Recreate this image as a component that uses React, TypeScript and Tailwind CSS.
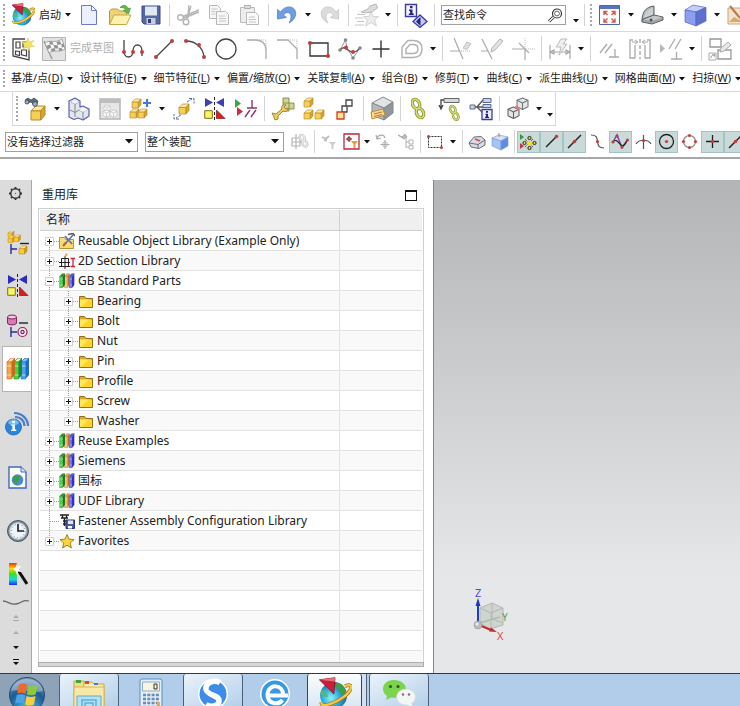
import React from 'react'
import { clsx } from 'clsx'

interface IconProps {
  w?: number
  h?: number
  children: React.ReactNode
}

function Icon({ w = 24, h = 24, children }: IconProps) {
  return (
    <svg width={w} height={h} viewBox={`0 0 ${w} ${h}`} fill="none" className="shrink-0" aria-hidden="true">
      {children}
    </svg>
  )
}

// Shared shapes, placed with x / y inside an Icon

interface ShapeProps {
  x?: number
  y?: number
  s?: number
}

function Cube({ x = 0, y = 0, s = 1, light = '#fdeaa0', mid = '#f5cf5a', dark = '#d9a52c', line = '#b58a22' }: ShapeProps & { light?: string; mid?: string; dark?: string; line?: string }) {
  return (
    <g transform={`translate(${x} ${y}) scale(${s})`} stroke={line} strokeWidth={0.7} strokeLinejoin="round">
      <path d="M0 3.500 3.500 0H10L7 3.500z" fill={light} />
      <path d="M0 3.500h7V10H0z" fill={mid} />
      <path d="M7 3.500 10 0v6.500L7 10z" fill={dark} />
    </g>
  )
}

function Glass({ x = 0, y = 0, s = 1, line = '#777', fill = '#e3e6ea' }: ShapeProps & { line?: string; fill?: string }) {
  return (
    <g transform={`translate(${x} ${y}) scale(${s})`} stroke={line} strokeWidth={1} strokeLinejoin="round">
      <path d="M5 0 10 2v6L5 10.500 0 8V2z" fill={fill} />
      <path d="M0 2l5 2.500L10 2M5 4.500v6" />
    </g>
  )
}

function Dot({ x, y, r = 2, fill = '#c93a3a' }: { x: number; y: number; r?: number; fill?: string }) {
  return <circle cx={x} cy={y} r={r} fill={fill} />
}

function Link({ x = 0, y = 0, s = 1, color = '#8c9a2c', glow = '#d8dd84' }: ShapeProps & { color?: string; glow?: string }) {
  return (
    <g transform={`translate(${x} ${y}) scale(${s})`}>
      <g stroke={color} strokeWidth={3.4}>
        <ellipse cx="5" cy="6" rx="3.400" ry="4.800" transform="rotate(-25 5 6)" />
        <ellipse cx="9" cy="15" rx="3.400" ry="4.800" transform="rotate(-25 9 15)" />
      </g>
      <g stroke={glow} strokeWidth={1.6}>
        <ellipse cx="5" cy="6" rx="3.400" ry="4.800" transform="rotate(-25 5 6)" />
        <ellipse cx="9" cy="15" rx="3.400" ry="4.800" transform="rotate(-25 9 15)" />
      </g>
    </g>
  )
}

function Globe({ size = 24 }: { size?: number }) {
  return (
    <svg width={size} height={size} viewBox="0 0 24 24" fill="none" className="shrink-0" aria-hidden="true">
      <defs>
        <radialGradient id="globe" cx="0.4" cy="0.6" r="0.65">
          <stop offset="0" stopColor="#8ff0fa" />
          <stop offset="0.5" stopColor="#2cb0e0" />
          <stop offset="1" stopColor="#1450a4" />
        </radialGradient>
      </defs>
      <circle cx="11" cy="13" r="9.500" fill="url(#globe)" />
      <path d="M13 4c4 0 7 4 7 8-2 1-4 0-5-2s-4-3-2-6z" fill="#3aa04c" />
      <path d="M3 9c2 0 4 3 4 5-2 1-5-1-5-3z" fill="#58b87c" />
      <path d="M19 6.500c3.500-1.500 4.800-.6 4.200 1.500C22 12 15 17 9 19c-4 1.300-7 1-6.500-1" stroke="#a8740f" strokeWidth="2.600" />
      <path d="M19 6.500c3.500-1.500 4.800-.6 4.200 1.500C22 12 15 17 9 19c-4 1.300-7 1-6.500-1" stroke="#f6c845" strokeWidth="1.600" />
      <path d="M1 2 12 .5 11.200 12z" fill="#c81f38" stroke="#8e1428" strokeWidth=".6" strokeLinejoin="round" />
      <path d="M1 2 12 .5l-.3 2.700z" fill="#e8707c" />
    </svg>
  )
}

function Mirror({ blue = '#2b2bc4' }: { blue?: string }) {
  return (
    <Icon w={22} h={23}>
      <path d="M1 1v9l8-4.500zM20 1v9l-8-4.500z" fill={blue} />
      <path d="M10.500 0v23" stroke="#222" strokeDasharray="3 2" />
      <path d="M.7 13.700h7.600v7.600H.7z" fill="#fbf45a" stroke="#7d7020" />
      <path d="M12.500 13v8.500h8.500z" fill="#d42222" stroke="#8a1010" strokeWidth=".7" />
    </Icon>
  )
}

function NewIcon() {
  return (
    <Icon w={18} h={22}>
      <path d="M1.500 1.500h10l5 5v14h-15z" fill="#eceffd" stroke="#6d78c8" />
      <path d="M11.500 1.500v5h5z" fill="#fff" stroke="#6d78c8" strokeLinejoin="round" />
    </Icon>
  )
}

function OpenIcon() {
  return (
    <Icon w={24} h={22}>
      <path d="M1.500 20V7l2-2h6l2 2h7v13z" fill="#eed274" stroke="#b89a3c" />
      <path d="M1.500 20.500 6 11h17l-4.500 9.500z" fill="#fdf3ae" stroke="#c4a84a" strokeLinejoin="round" />
      <path d="M12 3.500c3-3 6.500-3 8 1l2.500-.5-2 6-5-3.500 2-.7c-1-1.800-3-2.600-5.500-2.300z" fill="#63b94a" stroke="#3a8a2c" strokeWidth=".6" />
    </Icon>
  )
}

function SaveIcon() {
  return (
    <Icon w={20} h={20}>
      <path d="M1 1h18v18H3l-2-2z" fill="#5468a4" stroke="#3a4a80" />
      <path d="M4 1.500h12v9H4z" fill="#dfe9f0" />
      <path d="M5.500 13h9v6h-9z" fill="#c7cedd" />
      <path d="M7 14h3v4H7z" fill="#2e3f7d" />
    </Icon>
  )
}

function CutIcon() {
  return (
    <Icon w={24} h={22}>
      <g stroke="#b4b4b4" strokeWidth="1.400">
        <circle cx="4.500" cy="13.500" r="2.800" />
        <circle cx="10" cy="18" r="2.800" />
        <path d="M7 12.500 23 6M11.500 15.500 13 1M23 8 8 14M15 2l-4 13" />
      </g>
    </Icon>
  )
}

function CopyIcon() {
  return (
    <Icon w={22} h={22}>
      <g fill="#f6f6f6" stroke="#b8b8b8">
        <path d="M1.500 1.500h8l3 3v10h-11z" />
        <path d="M8.500 7.500h9l3 3v10h-12z" />
      </g>
      <path d="M3.500 5h6M3.500 7.500h4M3.500 10h4M11 12h6M11 14.500h7M11 17h7" stroke="#c4c4c4" />
    </Icon>
  )
}

function PasteIcon() {
  return (
    <Icon w={22} h={22}>
      <path d="M1.500 3.500h14v15h-14z" fill="#ededed" stroke="#b8b8b8" />
      <path d="M5.500 1.500h6v3h-6z" fill="#ddd" stroke="#b0b0b0" />
      <path d="M7.500 8.500h9l3 3v9h-12z" fill="#fafafa" stroke="#b8b8b8" />
      <path d="M10 13h6M10 15.500h7M10 18h7" stroke="#c4c4c4" />
    </Icon>
  )
}

function UndoIcon() {
  return (
    <Icon w={22} h={20}>
      <path d="M1.500 4.500v9.500l9-1.500-3-2.500c2.500-3.500 7-3.500 7.500 1 .2 2.500-1 5-2 7 5-2.500 7.500-7 6.500-11.500C18 .5 9 0 4.500 7z" fill="#6f9ce2" stroke="#4a78c8" strokeWidth=".7" strokeLinejoin="round" />
    </Icon>
  )
}

function RedoIcon() {
  return (
    <Icon w={22} h={20}>
      <path d="M19.500 4.500v9.500l-8-1.500 3-2.500c-2.500-3.500-7-3.500-7.500 1-.2 2.500 1 5 2 7-5-2.500-7.500-7-6.500-11.500C4 .5 13 0 17 7z" fill="#dcdcdc" stroke="#c0c0c0" strokeWidth=".7" strokeLinejoin="round" />
    </Icon>
  )
}

function TouchIcon() {
  return (
    <Icon w={26} h={24}>
      <path d="M17 8l2 5.500h5.500L20.500 17l2 6-5.500-3.500L11.500 23l2-6-4-3.500H15z" fill="#ececec" stroke="#d4d4d4" />
      <path d="M7 9l7-3 2-3 6-2 1.500 4-5 3.500-6 1.500z" fill="#dcdcdc" stroke="#b8b8b8" />
      <path d="M3 11.500h8M1 15h8M3 18.500h7M1 22h9" stroke="#c8c8c8" />
    </Icon>
  )
}

function InfoCommandIcon() {
  return (
    <Icon w={24} h={26}>
      <path d="M1.500 2.500h11v12h-11z" fill="#f4f4fd" stroke="#3b3ba0" strokeWidth="1.400" />
      <path d="M6 4h2.500v2.200H6zM5 7.500h3.500v4h1.300V13H4.800v-1.500h1.300V9H5z" fill="#23238c" />
      <path d="M16 13l7 6.500-7 6-7-6z" fill="#c9c9ef" stroke="#3b3ba0" strokeWidth="1.300" />
      <path d="M16.500 15v9l-4.500-4.500z" fill="#23238c" />
    </Icon>
  )
}

function FitIcon() {
  return (
    <Icon w={21} h={20}>
      <path d="M.5.5h20v19H.5z" fill="#fbfbff" stroke="#4a66ac" />
      <path d="M1 1h19v3H1z" fill="#5674bd" />
      <g stroke="#d8563c" strokeWidth="1.400">
        <path d="M5 10V6.500h3.500M5.500 7l3 3M16 10V6.500h-3.500M15.500 7l-3 3M5 13.500V17h3.500M5.500 16.500l3-3M16 13.500V17h-3.500M15.500 16.500l-3-3" />
      </g>
    </Icon>
  )
}

function BracketIcon() {
  return (
    <Icon w={23} h={20}>
      <path d="M1 16C1 8 4 2 13 1v9L3 16z" fill="#b4b8ba" stroke="#5c6063" strokeLinejoin="round" />
      <path d="M3 13C4 7 7 4 12 3v6.500z" fill="#ced1d3" />
      <path d="M1 14.500 13 10l9 2v3l-11 4-10-2z" fill="#a2a6a8" stroke="#5c6063" strokeLinejoin="round" />
      <path d="M3 14.500l10-3.700 8 1.500-10 3.700z" fill="#c4c8ca" />
      <circle cx="10" cy="15" r="1.500" fill="#4c5052" />
    </Icon>
  )
}

function ShadedIcon() {
  return (
    <Icon w={23} h={23}>
      <path d="M1 6 9 1l13 2.500L12 8z" fill="#c4cefa" stroke="#5464bc" strokeWidth=".7" />
      <path d="M1 6l11 2v14L1 18z" fill="#8c9eee" stroke="#5464bc" strokeWidth=".7" />
      <path d="M12 8l10-4.500V17l-10 5z" fill="#5c70d0" stroke="#5464bc" strokeWidth=".7" />
    </Icon>
  )
}

function PhotoIcon() {
  return (
    <Icon w={24} h={20}>
      <path d="M1 3h22v16H1z" fill="#f2e3cf" stroke="#c9a478" />
      <path d="M2 17l5-5 5 3 3-3 7 5z" fill="#d8a86c" />
      <path d="M3 1l10 12" stroke="#b57a48" strokeWidth="2" />
    </Icon>
  )
}

function SearchIcon() {
  return (
    <Icon w={16} h={15}>
      <circle cx="10" cy="5.500" r="4.500" stroke="#333" strokeWidth="1.200" />
      <circle cx="10" cy="5.500" r="2.400" stroke="#555" strokeWidth=".9" />
      <path d="M6.500 9 2 13.500" stroke="#333" strokeWidth="3" />
      <path d="M6.500 9 2 13.500" stroke="#fff" strokeWidth="1.200" />
    </Icon>
  )
}

function SketchIcon() {
  return (
    <Icon w={24} h={24}>
      <path d="M14 2H2v17l16 4V12" stroke="#444" strokeWidth="1.300" />
      <path d="M5 5h4v6H5zM12 5h3v5h-3zM4.500 14l4 .5v4l-4-1zM10.500 13h5v6l-5-1.200z" fill="#fff" stroke="#444" strokeWidth="1.200" />
      <path d="M17 1l1.300 4L23 3.500 20 7l3.500 2.500-4.500.3-.8 4-2.200-3.500L12 12l2-4-3.500-3 4.500.2z" fill="#f1e45a" stroke="#cfc26a" strokeWidth=".5" />
    </Icon>
  )
}

function FlagIcon() {
  return (
    <Icon w={24} h={24}>
      <path d="M.5.5h23v23H.5z" fill="#e3e3e3" stroke="#b4b4b4" />
      <path d="M2 4l8 18" stroke="#999" strokeWidth="1.400" />
      <path d="M3 6c5-4 9 1 17-4l3 10c-6 4-11 0-16 4z" fill="#f5f5f5" stroke="#a6a6a6" />
      <path d="M7 4l3.500.8 1 3-3.500-.5zM14.500 5l3.500-1 1.200 3.200-3.700.8zM11.500 8l4 .2 1 3.300-4-.3zM4.500 9l3.500-1.700 1.200 3.200-3.500 2zM19.200 7.200l2.300-.8 1 3.400-2.500.8zM8.500 12l4-1 1 3-3.500.6zM16.500 11.500l3-.8 1 2.500-3.300 1z" fill="#929292" />
    </Icon>
  )
}

function ProfileIcon() {
  return (
    <Icon w={24} h={22}>
      <path d="M3 2v11c0 8 9 8 9 0 0-8 9-8 9 0v5" stroke="#444" strokeWidth="1.300" />
      <Dot x={3} y={14} />
      <Dot x={12} y={14} />
      <Dot x={21} y={14} />
    </Icon>
  )
}

function LineIcon() {
  return (
    <Icon w={22} h={22}>
      <path d="M3 19 19 3" stroke="#444" strokeWidth="1.300" />
      <Dot x={3} y={19} />
      <Dot x={19} y={3} />
    </Icon>
  )
}

function ArcIcon() {
  return (
    <Icon w={24} h={22}>
      <path d="M3 3c9 0 17 6 18 16" stroke="#444" strokeWidth="1.300" />
      <Dot x={3} y={3} />
      <Dot x={16} y={7} />
      <Dot x={21} y={19} />
    </Icon>
  )
}

function CircleIcon() {
  return (
    <Icon w={24} h={24}>
      <circle cx="12" cy="12" r="10" stroke="#444" strokeWidth="1.300" />
    </Icon>
  )
}

function FilletIcon() {
  return (
    <Icon w={22} h={22}>
      <path d="M1 2h9c6 0 10 4 10 10v9" stroke="#aaa" strokeWidth="1.300" />
      <path d="M11 2h9v9" stroke="#bbb" strokeDasharray="1 1" />
    </Icon>
  )
}

function ChamferIcon() {
  return (
    <Icon w={22} h={22}>
      <path d="M0 2h11l9 9v10" stroke="#aaa" strokeWidth="1.300" />
      <path d="M11 2h9v9" stroke="#bbb" strokeDasharray="1 1" />
    </Icon>
  )
}

function RectIcon() {
  return (
    <Icon w={24} h={20}>
      <path d="M3 4h18v13H3z" stroke="#333" strokeWidth="1.300" />
      <Dot x={3} y={4} />
      <Dot x={21} y={17} />
    </Icon>
  )
}

function SplineIcon() {
  return (
    <Icon w={24} h={22}>
      <path d="M2 12 7.500 2 9 10 15 20 22 10" stroke="#999" />
      <path d="M3 11.500c4-5 6 2.500 12 2.500 3 0 5-1.500 6.500-4" stroke="#555" strokeWidth="1.400" />
      <Dot x={2} y={12} r={1.800} fill="#888" />
      <Dot x={7.500} y={2} r={1.800} fill="#888" />
      <Dot x={15} y={20} r={1.800} fill="#888" />
      <Dot x={22} y={10} r={1.800} fill="#888" />
      <Dot x={8} y={9.500} />
      <Dot x={15} y={14} />
    </Icon>
  )
}

function PlusIcon() {
  return (
    <Icon w={20} h={20}>
      <path d="M10 1.500v17M1.500 10h17" stroke="#333" strokeWidth="1.400" />
    </Icon>
  )
}

function OffsetIcon() {
  return (
    <Icon w={24} h={22}>
      <path d="M2 19.500V9l6-6.500h5c6 0 9 3.500 9 8.500s-3 8.500-9 8.500z" stroke="#b0b0b0" strokeWidth="1.400" />
      <path d="M6 15.500V11l4-4.500h3c3.500 0 5 2 5 4.500s-1.500 4.500-5 4.500z" stroke="#b0b0b0" strokeWidth="1.400" />
    </Icon>
  )
}

function TrimIcon() {
  return (
    <Icon w={24} h={24}>
      <path d="M5 1l9 21M1 14h10" stroke="#aaa" strokeWidth="1.200" />
      <path d="M12 14h10" stroke="#bbb" strokeDasharray="1 1" />
      <path d="M14 11l4-6 4 1.500-4 6z" fill="#ddd" stroke="#c4c4c4" />
    </Icon>
  )
}

function ExtendIcon() {
  return (
    <Icon w={24} h={24}>
      <path d="M2 2l10 20M1 14h7" stroke="#aaa" strokeWidth="1.200" />
      <path d="M11 15l1-4 8-9 3 2-8 9z" fill="#e4e4e4" stroke="#b0b0b0" />
    </Icon>
  )
}

function CornerIcon() {
  return (
    <Icon w={24} h={24}>
      <path d="M1 12h13v11M8 6l10 10" stroke="#aaa" strokeWidth="1.200" />
      <path d="M14 1v11h10" stroke="#bbb" strokeDasharray="1 1" />
    </Icon>
  )
}

function DimensionIcon() {
  return (
    <Icon w={24} h={22}>
      <path d="M2 7v14M22 7v14M2 14h20M2 14l4-2v4zM22 14l-4-2v4z" stroke="#aaa" strokeWidth="1.200" />
      <path d="M13 1h6l-4 5h4l-8 11 2-8H8z" fill="#eee" stroke="#bbb" />
    </Icon>
  )
}

function ParallelIcon() {
  return (
    <Icon w={22} h={22}>
      <path d="M2 15 9 6M7 15l7-9M11 19h10M17 11v8" stroke="#aaa" strokeWidth="1.300" />
    </Icon>
  )
}

function SymmetricIcon() {
  return (
    <Icon w={24} h={22}>
      <path d="M5 2H2v18h5V7M19 2h3v18h-5V7" stroke="#aaa" strokeWidth="1.300" />
      <path d="M12 1v20" stroke="#888" strokeDasharray="4 2" />
      <path d="M4 4h5M20 4h-5M7 2l3 2-3 2M17 2l-3 2 3 2" stroke="#aaa" />
    </Icon>
  )
}

function ConstraintIcon() {
  return (
    <Icon w={24} h={24}>
      <path d="M1 7v9l5-4.500z" fill="#b8b8b8" />
      <path d="M10 12l6-10M16 12l6-10M12 22h11M17.500 15v7" stroke="#aaa" strokeWidth="1.300" />
    </Icon>
  )
}

function ConvertIcon() {
  return (
    <Icon w={24} h={24}>
      <path d="M2 2h11v8H2zM10 13h13v9H10z" stroke="#999" strokeWidth="1.300" />
      <path d="M1 16h7v7H1z" fill="#fff" stroke="#aaa" />
      <path d="M3 21c0-2 1-3 3-3M4.500 17.500h2v2" stroke="#999" />
      <path d="M12 15l1-4 7-6 3 3-7 6z" fill="#e8e8e8" stroke="#aaa" />
    </Icon>
  )
}

function FindPartIcon() {
  return (
    <Icon w={24} h={24}>
      <Cube x={7} y={9} s={1.400} />
      <path d="M1 3l3-2 3 2 3-2 4 3-1 3-3 1-3-3-4 1z" fill="#5c6a78" stroke="#3c4650" strokeWidth=".7" />
      <circle cx="3" cy="5" r="2" fill="#9fb0c0" stroke="#333d48" strokeWidth=".8" />
      <circle cx="11" cy="7" r="2.400" fill="#9fb0c0" stroke="#333d48" strokeWidth=".8" />
    </Icon>
  )
}

function AssemblyIcon() {
  return (
    <Icon w={22} h={24}>
      <path d="M1 4l6-3 5 3v6l3-1 6 3v7l-6 4-5-2-4 1.500L1 20z" fill="#e4e6ee" stroke="#5b5fb0" strokeWidth="1.200" strokeLinejoin="round" />
      <path d="M3 5l4 2 4-2M7 7v13M2 13l5 2.500 4-2.500M11 13l4 2 5-3M15 15v7" stroke="#858890" />
      <path d="M3 5l4-2 4 2-4 2zM11 13l4-2 5 1.500-5 2.500z" fill="#f8f8fa" />
    </Icon>
  )
}

function WindowPartsIcon() {
  return (
    <Icon w={22} h={22}>
      <path d="M1 1h20v20H1z" fill="#e6e6e6" stroke="#b5b5b5" strokeWidth="1.500" />
      <path d="M1 1h20v4H1z" fill="#bdbdbd" />
      <Glass x={5} y={7} s={0.600} line="#bbb" fill="#f8f8f8" />
      <Glass x={4} y={12} s={0.700} line="#bbb" fill="#f8f8f8" />
      <Glass x={11} y={12} s={0.700} line="#bbb" fill="#f8f8f8" />
    </Icon>
  )
}

function AddPartIcon() {
  return (
    <Icon w={24} h={24}>
      <Cube x={3} y={2} s={0.900} />
      <Cube x={1} y={12} s={0.900} />
      <Cube x={9} y={12} s={0.900} />
      <path d="M18 2v8M14 6h8" stroke="#3f7ad6" strokeWidth="2.200" />
    </Icon>
  )
}

function MovePartIcon() {
  return (
    <Icon w={24} h={24}>
      <Cube x={7} y={7} s={1} />
      <path d="M15 5l5-3M17 1.500h5v5M9 18l-5 3M7 22H2v-5" stroke="#4c6aa4" strokeDasharray="3 1" />
    </Icon>
  )
}

function ShowConstraintIcon() {
  return (
    <Icon w={24} h={24}>
      <path d="M1 2v9l6-4.500z" fill="#35a845" />
      <path d="M3 10v9l6-4.500z" fill="#c8323c" />
      <path d="M18 3v8M13 11h10M11 20l5-7M17 20l5-7" stroke="#8a3a6a" strokeWidth="1.400" />
    </Icon>
  )
}

function WrenchPartIcon() {
  return (
    <Icon w={24} h={24}>
      <path d="M12 1h6v5h5v6h-5v2h-6z" fill="#cfd598" stroke="#88904a" />
      <path d="M12 6h6v6h-6" stroke="#88904a" />
      <path d="M1 16l4 1 6-5c-1-3 1-5 4-4l-2 2 2 2 2-1c0 3-2 4-5 3l-5 5 0 3-3 1-1-3z" fill="#efcf62" stroke="#a5842a" strokeLinejoin="round" />
    </Icon>
  )
}

function ThreePartsIcon() {
  return (
    <Icon w={24} h={24}>
      <Cube x={2} y={1} s={0.900} />
      <Cube x={2} y={13} s={0.900} />
      <Cube x={13} y={13} s={0.900} />
    </Icon>
  )
}

function StepBoxesIcon() {
  return (
    <Icon w={18} h={22}>
      <path d="M10 2h6v6h-6zM6 8h5v6H6z" fill="#fff" stroke="#444" strokeWidth="1.300" />
      <path d="M1 14h7v7H1z" fill="#fbe48a" stroke="#d43c2c" strokeWidth="1.300" />
    </Icon>
  )
}

function ExplodeIcon() {
  return (
    <Icon w={24} h={26}>
      <path d="M2 7 13 1l10 5-9 6z" fill="#e1e4e6" stroke="#85898c" />
      <path d="M2 7l12 5v12L2 19z" fill="#b5babd" stroke="#85898c" />
      <path d="M14 12l9-6v11l-9 7z" fill="#8f9699" stroke="#85898c" />
      <path d="M1 16l12-3 2 6-13 4z" fill="#f8d78e" stroke="#c48a36" />
      <path d="M4 18l8-2M4 20.500l8-2" stroke="#c87a30" />
    </Icon>
  )
}

function LinkIcon() {
  return (
    <Icon w={15} h={24}>
      <Link y={1} />
    </Icon>
  )
}

function SequenceIcon() {
  return (
    <Icon w={24} h={24}>
      <path d="M3 12V3h4M1 8l2 4 2-4" stroke="#444" strokeWidth="1.300" />
      <path d="M6 1.500h15v4H6z" fill="#d5d8dc" stroke="#666" />
      <Link x={11} y={8} s={0.750} />
    </Icon>
  )
}

function RelationIcon() {
  return (
    <Icon w={24} h={24}>
      <path d="M1 10h7L14 3M8 10l6 6M8 10h6" stroke="#555" strokeWidth="1.300" />
      <path d="M1 8h5v4H1zM14 1.500h8v4h-8zM14 7.500h8v3h-8z" fill="#ccd3e4" stroke="#5a6a8a" />
      <path d="M13 12.500h10v10H13z" fill="#eef" stroke="#3b3ba0" strokeWidth="1.300" />
      <path d="M17 14h2v1.800h-2zM16.500 16.800h2.500v3h1V21h-4v-1.200h1v-1.800h-.5z" fill="#23238c" />
    </Icon>
  )
}

function InterferenceIcon() {
  return (
    <Icon w={24} h={24}>
      <Glass x={11} y={1} s={1.100} line="#777" />
      <Glass x={2} y={10} s={1.100} line="#666" />
      <path d="M9 9l4 1v3l-4-1z" fill="#e0747a" />
    </Icon>
  )
}

// Selection bar

function AxisIcon() {
  return (
    <Icon w={18} h={18}>
      <path d="M5 1v15M1 5h8v8H1zM1 9h10" stroke="#b5b5b5" strokeWidth="1.200" />
      <Link x={8} y={1} s={0.650} color="#bbb" glow="#eee" />
    </Icon>
  )
}

function FilterGrayIcon() {
  return (
    <Icon w={16} h={16}>
      <path d="M1 3l4 2 3-3M3 6l3 1" stroke="#bbb" strokeWidth="1.800" />
      <path d="M8 8h7l-2.500 3v4h-2v-4z" fill="#ccc" />
    </Icon>
  )
}

function FilterIcon() {
  return (
    <Icon w={17} h={17}>
      <path d="M1 1h15v15H1z" fill="#fff" stroke="#b8283c" strokeWidth="1.300" />
      <path d="M6 3v6M3 6h6" stroke="#444" />
      <circle cx="6" cy="6" r="1.800" stroke="#b8283c" />
      <path d="M8 8h7l-2.500 3v4h-2v-4z" fill="#e89a3a" />
    </Icon>
  )
}

function ResetIcon() {
  return (
    <Icon w={16} h={17}>
      <path d="M2 6c1-5 7-5 8-1M1 2l1 4 4-1M10 7v9M5.500 11.500h9" stroke="#aaa" strokeWidth="1.200" />
      <circle cx="10" cy="11.500" r="2.500" stroke="#bbb" />
    </Icon>
  )
}

function TreeFindIcon() {
  return (
    <Icon w={17} h={17}>
      <path d="M1 2l4 2 3-3 2 3-3 2z" fill="#bbb" stroke="#aaa" />
      <path d="M9 5v10M9 9h3M9 14h3M12 7h4v4h-4zM12 12.500h4v3.500h-4z" stroke="#b5b5b5" />
    </Icon>
  )
}

function MarqueeIcon() {
  return (
    <Icon w={18} h={16}>
      <path d="M2.500 2.500h13v11h-13z" stroke="#333" strokeDasharray="2 1" />
      <Dot x={2.500} y={2.500} r={1.500} />
      <Dot x={15.500} y={13.500} r={1.500} />
    </Icon>
  )
}

function FaceIcon() {
  return (
    <Icon w={18} h={16}>
      <path d="M1 9l5-6 7-.5L17 6v5l-6 3.500-8-1.500z" fill="#d8dbe2" stroke="#6a6f7c" strokeLinejoin="round" />
      <path d="M1 9l9 1.500L17 6M10 10.500v4" stroke="#6a6f7c" />
      <path d="M7 5l5 2" stroke="#d8475a" strokeWidth="1.600" />
    </Icon>
  )
}

function BlueCubeIcon() {
  return (
    <Icon w={18} h={18}>
      <path d="M1 5l7-3 9 2-7 4z" fill="#d4e4fb" stroke="#7f9fd4" strokeWidth=".7" />
      <path d="M1 5l9 3v9L1 13z" fill="#a4c4f4" stroke="#7f9fd4" strokeWidth=".7" />
      <path d="M10 8l7-4v9l-7 4z" fill="#5f8ce0" stroke="#7f9fd4" strokeWidth=".7" />
      <path d="M8 0v4" stroke="#d06a6a" />
    </Icon>
  )
}

function SnapAllIcon() {
  return (
    <Icon w={19} h={18}>
      <path d="M1 1v6l4-3z" fill="#2a9a3c" />
      <path d="M1 10v6l4-3z" fill="#c8323c" />
      <path d="M6 6l8 8M14 6l-8 8" stroke="#222" strokeDasharray="1 1" />
      <Dot x={10.500} y={10} r={2.200} fill="#f2de2e" />
      <g stroke="#222" fill="#f2de2e">
        <circle cx="10.500" cy="5" r="1.600" />
        <circle cx="10.500" cy="15" r="1.600" />
        <circle cx="5.500" cy="10" r="1.600" />
        <circle cx="15.500" cy="10" r="1.600" />
      </g>
    </Icon>
  )
}

function SnapEndIcon() {
  return (
    <Icon w={17} h={17}>
      <path d="M3 14 13 4" stroke="#222" strokeWidth="1.400" />
      <Dot x={13.500} y={3.500} r={1.800} />
    </Icon>
  )
}

function SnapMidIcon() {
  return (
    <Icon w={17} h={17}>
      <path d="M2 15 15 2" stroke="#222" strokeWidth="1.400" />
      <Dot x={8.500} y={8.500} r={1.800} />
    </Icon>
  )
}

function SnapControlIcon() {
  return (
    <Icon w={15} h={17}>
      <path d="M1 2c6 0 6 3 6.500 6.500C8 13 9 15 14 15" stroke="#555" strokeWidth="1.200" />
      <Dot x={7.500} y={8.500} r={1.600} />
    </Icon>
  )
}

function SnapPoleIcon() {
  return (
    <Icon w={19} h={17}>
      <path d="M2 9 6 2l5 13 5-8" stroke="#7a3cb0" strokeWidth="1.400" />
      <path d="M2 9c4-4 5 1 8 3s5-2 6-4" stroke="#222" strokeWidth="1.200" />
      <Dot x={2} y={9} r={1.600} />
      <Dot x={6} y={3} r={1.600} />
      <Dot x={11} y={14} r={1.600} />
      <Dot x={16.500} y={7} r={1.600} />
    </Icon>
  )
}

function SnapCrossIcon() {
  return (
    <Icon w={17} h={17}>
      <path d="M1 11C4 6 13 6 16 11M8.500 2v14" stroke="#555" strokeWidth="1.200" />
      <Dot x={8.500} y={7.500} r={1.600} />
    </Icon>
  )
}

function SnapCenterIcon() {
  return (
    <Icon w={17} h={17}>
      <circle cx="8.500" cy="8.500" r="7" stroke="#222" strokeWidth="1.300" />
      <Dot x={8.500} y={8.500} r={1.600} />
    </Icon>
  )
}

function SnapQuadrantIcon() {
  return (
    <Icon w={17} h={17}>
      <circle cx="8.500" cy="8.500" r="6" stroke="#888" strokeWidth="1.200" />
      <Dot x={8.500} y={2.500} r={1.600} />
      <Dot x={8.500} y={14.500} r={1.600} />
      <Dot x={2.500} y={8.500} r={1.600} />
      <Dot x={14.500} y={8.500} r={1.600} />
    </Icon>
  )
}

function SnapPointIcon() {
  return (
    <Icon w={17} h={17}>
      <path d="M8.500 2v13M2 8.500h13" stroke="#222" strokeWidth="1.300" />
      <Dot x={8.500} y={8.500} r={1.500} />
    </Icon>
  )
}

// Resource bar

function GearIcon() {
  return (
    <Icon w={15} h={15}>
      <circle cx="7.500" cy="7.500" r="4.700" stroke="#333" strokeWidth="1.400" />
      <path d="M7.500 1v2M7.500 12v2M1 7.500h2M12 7.500h2M3 3l1.200 1.200M10.800 10.800 12 12M12 3l-1.200 1.200M3 12l1.200-1.200" stroke="#333" strokeWidth="1.800" />
      <Dot x={7.500} y={7.500} r={0.700} fill="#666" />
    </Icon>
  )
}

function NavigatorIcon() {
  return (
    <Icon w={24} h={24}>
      <Cube x={2} y={0} s={0.600} light="#ffe890" mid="#ffc928" dark="#dc9a10" />
      <Cube x={2} y={5} s={0.650} light="#ffe890" mid="#ffc928" dark="#dc9a10" />
      <Cube x={8} y={4} s={0.650} light="#ffe890" mid="#ffc928" dark="#dc9a10" />
      <Cube x={13} y={15} s={0.800} light="#ffe890" mid="#ffc928" dark="#dc9a10" />
      <path d="M14 12.500h9" stroke="#222" strokeWidth="1.400" />
      <path d="M5 13v10M5 18h6" stroke="#2a2a9a" strokeWidth="1.400" />
    </Icon>
  )
}

function HistoryIcon() {
  return (
    <Icon w={23} h={24}>
      <path d="M1.500 3v6c0 2.500 9 2.500 9 0V3" fill="#d67cb4" stroke="#84245e" />
      <ellipse cx="6" cy="3" rx="4.500" ry="2" fill="#f2c4e0" stroke="#84245e" />
      <path d="M13 9h9" stroke="#222" strokeWidth="1.400" />
      <path d="M5 13v10M5 18h6" stroke="#2a2a9a" strokeWidth="1.400" />
      <circle cx="16.500" cy="18" r="4.500" fill="#f8e4f0" stroke="#84245e" strokeWidth="1.200" />
      <circle cx="16.500" cy="18" r="1.600" stroke="#84245e" strokeWidth="1.200" />
    </Icon>
  )
}

function Book({ x, front, side, top }: { x: number; front: string; side: string; top: string }) {
  return (
    <g transform={`translate(${x} 0)`}>
      <path d="M0 4 4 0h4L4.500 4z" fill={top} stroke={side} strokeWidth=".7" />
      <path d="M4.500 4 8 0v17l-3.500 4z" fill={side} />
      <path d="M0 4h4.500v17H0z" fill={front} stroke={side} strokeWidth=".6" />
      <path d="M0 8h4.500M0 17h4.500" stroke="#fff" strokeOpacity=".6" />
    </g>
  )
}

function LibraryIcon() {
  return (
    <Icon w={24} h={22}>
      <Book x={15} front="#4aa0f0" side="#1c6cd0" top="#8cc0f4" />
      <Book x={8} front="#46d63a" side="#1c8a22" top="#e8f4e0" />
      <Book x={1} front="#f4a44a" side="#c86a1c" top="#f8e4cc" />
    </Icon>
  )
}

function BooksIcon() {
  return (
    <svg width="16" height="16" viewBox="0 0 24 22" className="shrink-0" aria-hidden="true">
      <Book x={15} front="#7476f4" side="#3030cc" top="#5a5ce0" />
      <Book x={8} front="#f4bc6c" side="#b8762a" top="#e8a050" />
      <Book x={1} front="#4cd44c" side="#1c7a22" top="#2ca02c" />
    </svg>
  )
}

function BroadcastIcon() {
  return (
    <Icon w={25} h={25}>
      <path d="M9 2c8 0 14 6 14 13M10 6c6 0 9.500 4 9.500 9" stroke="#4a7cc8" strokeWidth="2.200" />
      <circle cx="8.500" cy="16" r="8" fill="#2a86dc" stroke="#1a5aa4" strokeWidth=".7" />
      <path d="M3 12c2-5 9-5 11 0-3 3-8 3-11 0z" fill="#7cbaf0" />
      <path d="M7.300 10h2.600v2.300H7.300zM6.300 13.500h3.600v5h1.300v1.600H6.200v-1.600h1.200V15H6.300z" fill="#fff" />
    </Icon>
  )
}

function WebPageIcon() {
  return (
    <Icon w={19} h={23}>
      <path d="M1 1h12l5 5v16H1z" fill="#fff" stroke="#3a6cbc" strokeWidth="1.400" />
      <path d="M13 1v5h5" fill="#d8e6f8" stroke="#3a6cbc" />
      <circle cx="9.500" cy="14" r="5.800" fill="#4c8cd4" />
      <path d="M6 10c4-2 7 0 6 3s-3 1-3 5c-3 0-5-5-3-8zM13 14l2 1-2 3z" fill="#3c9c50" />
    </Icon>
  )
}

function ClockIcon() {
  return (
    <Icon w={24} h={24}>
      <circle cx="12" cy="12" r="10.500" fill="#7c8a98" stroke="#4c565f" />
      <circle cx="12" cy="12" r="8.300" fill="#eef4fa" stroke="#c0ccd8" />
      <path d="M12 5v7h6" stroke="#222" strokeWidth="1.700" />
      <circle cx="12" cy="12" r="6.800" stroke="#667" strokeWidth="1" strokeDasharray="1 2.560" />
    </Icon>
  )
}

function RolesIcon() {
  return (
    <Icon w={20} h={23}>
      <defs>
        <linearGradient id="rainbow" x1="0" y1="0" x2="0" y2="1">
          <stop offset="0" stopColor="#ff2a00" />
          <stop offset="0.25" stopColor="#ffd800" />
          <stop offset="0.5" stopColor="#3ce01c" />
          <stop offset="0.75" stopColor="#18d8e8" />
          <stop offset="1" stopColor="#1c2cf0" />
        </linearGradient>
      </defs>
      <path d="M1 0h8v22H1z" fill="url(#rainbow)" />
      <path d="M10 7l9 14" stroke="#111" strokeWidth="3" />
      <path d="M8 0l1 3.500L13 3l-2 3 2.500 3-3.500-.5L8.500 12 8 8.500 5 6l3-2z" fill="#fff" />
    </Icon>
  )
}

function WaveIcon() {
  return (
    <Icon w={28} h={8}>
      <path d="M1 3c5 0 7 4 13 3s7-5 13-3" stroke="#666" strokeWidth="1.300" />
    </Icon>
  )
}

// Tree icons

function FolderIcon() {
  return (
    <Icon w={16} h={16}>
      <path d="M1.500 14.500v-11h5l1.500 2h6.500v9z" fill="#e0a81c" stroke="#94701c" />
      <path d="M2 6.500h12V14H2z" fill="#ffd428" />
      <path d="M2 6.500h9L3 14H2z" fill="#ffe860" />
    </Icon>
  )
}

function ReusableIcon() {
  return (
    <Icon w={16} h={16}>
      <path d="M.5 15.500v-11h5l1 2h8v9z" fill="#f8dc78" stroke="#b8922c" />
      <path d="M5 12 14 2M6 3l7 8" stroke="#5a6cb4" strokeWidth="1.600" />
      <path d="M4 13l3-3.500" stroke="#c8642c" strokeWidth="2.200" />
      <path d="M9 1.500l5-1 2 2.500" stroke="#555" strokeWidth="1.500" />
    </Icon>
  )
}

function SectionIcon() {
  return (
    <Icon w={16} h={16}>
      <path d="M2.500 5.500h7v8h-7zM6 3v13M0 9.500h11M0 13.500h11" stroke="#222" />
      <path d="M5 4l2-4 2 2z" fill="#f0a83c" />
      <path d="M11.500 5.500H16M11.500 13.500H16M14 6v8" stroke="#c8283c" strokeWidth="1.300" />
    </Icon>
  )
}

function FastenerIcon() {
  return (
    <Icon w={16} h={16}>
      <path d="M1 2h9M2 5h7M3.500 2v3M7.500 2v3M5.500 5v8M4 8h3M4 11h3" stroke="#222" strokeWidth="1.400" />
      <path d="M7 7h8.500v8.500H7z" fill="#4c5ca8" stroke="#28347a" />
      <path d="M9 7.500h5v3.500H9z" fill="#dfe6f3" />
      <path d="M9 13h4v2.500H9z" fill="#fff" />
    </Icon>
  )
}

function StarIcon() {
  return (
    <Icon w={16} h={16}>
      <path d="M8 1.500l2 4.700 5 .4-3.800 3.300 1.200 5L8 12.200 3.600 15l1.200-5L1 6.600l5-.4z" fill="#fbd53c" stroke="#a8801c" strokeLinejoin="round" />
    </Icon>
  )
}

// Taskbar icons

function WindowsIcon() {
  return (
    <Icon w={38} h={38}>
      <defs>
        <radialGradient id="orb" cx="0.5" cy="0.9" r="0.9">
          <stop offset="0" stopColor="#4cc4ec" />
          <stop offset="0.6" stopColor="#1c5a94" />
          <stop offset="1" stopColor="#7a9cbc" />
        </radialGradient>
      </defs>
      <circle cx="19" cy="19" r="17.500" fill="url(#orb)" stroke="#2c4c6c" />
      <path d="M3 15C6-1 32-1 35 15 25 18 12 12 3 15z" fill="#fff" fillOpacity=".35" />
      <path d="M11 8.500c3-1.500 6-1 8 .3l-1.500 9c-2.300-1.300-5-1.500-8.300-.3z" fill="#ee6a2c" />
      <path d="M20.500 9.500c3 1.300 5.500 1.300 9-.2l-1.700 9c-3.300 1.300-6 1.300-9 0z" fill="#90c83c" />
      <path d="M8.800 19c3.300-1.200 6-1 8.500.3l-1.600 8.500c-2.300-1.300-5-1.500-8.500-.3z" fill="#4ca4e8" />
      <path d="M18.500 20c3 1.300 6 1.300 9 0L26 28.500c-3.200 1.300-6 1.300-9 0z" fill="#fccc3c" />
    </Icon>
  )
}

function ExplorerIcon() {
  return (
    <Icon w={34} h={34}>
      <path d="M2 3h10l2 3h8v26H2z" fill="#f4dc84" stroke="#c8a444" />
      <path d="M12 4h8l2 2h10v26H12z" fill="#fbeeb0" stroke="#c8a444" />
      <path d="M4 2h5v3H4z" fill="#3ca43c" />
      <path d="M13 3h4v3h-4z" fill="#d84c2c" />
      <path d="M22 5h4v2h-4z" fill="#3c7cd4" />
      <path d="M2 9h30v25H2z" fill="#f8e8a8" stroke="#d4b45c" />
      <path d="M5 18h24v16H5z" fill="#b4e0f4" stroke="#5cacd0" />
      <path d="M10 34V22h14v12M13 34v-9h8v9" stroke="#5cb0d4" strokeWidth="1.500" />
    </Icon>
  )
}

function CalculatorIcon() {
  return (
    <Icon w={24} h={34}>
      <rect x="1" y="1" width="22" height="36" rx="2" fill="#e4eef8" stroke="#5c8cbc" />
      <path d="M3.500 4h17v9h-17z" fill="#f8f4e0" stroke="#8cacc8" />
      <path d="M15 6h3v5h-3z" stroke="#333" />
      {[17, 21, 25, 29].map((y) => (
        <path key={y} d={`M4 ${y}h16`} stroke="#6c8cb0" strokeWidth="2.500" strokeDasharray="3 1.300" />
      ))}
      <path d="M18 24h3v5h-3z" fill="#f0a83c" />
    </Icon>
  )
}

function SogouIcon() {
  return (
    <Icon w={32} h={32}>
      <circle cx="16" cy="16" r="15" fill="#fff" />
      <circle cx="16" cy="16" r="13.500" fill="#3c8ce8" />
      <path d="M23 4.500C15 1 8 6 9 11.500c1.500 6.500 14 5 13 12-1 5-8 6-13 3" stroke="#fff" strokeWidth="5.500" />
    </Icon>
  )
}

function BrowserIcon() {
  return (
    <Icon w={32} h={32}>
      <circle cx="16" cy="16" r="15" fill="#fff" />
      <circle cx="16" cy="16" r="13.500" fill="#3498e8" />
      <path d="M29 17.500H10M24 17.500C25 5.500 9 5.500 8.500 16.500 8.500 27 20 27 23.500 22" stroke="#fff" strokeWidth="4" />
    </Icon>
  )
}

function ChatIcon() {
  return (
    <Icon w={34} h={30}>
      <path d="M12 2C5 2 1 6 1 11c0 3 1.500 5 4 7l-1 4 5-2.500c8 1.500 15-2 15-8.500C24 6 19 2 12 2z" fill="#7cd44c" />
      <ellipse cx="24" cy="19" rx="9.500" ry="8" fill="#f4f6f6" stroke="#d0d8d8" strokeWidth=".5" />
      <path d="M29 25l2 4-6-2.500z" fill="#f4f6f6" />
      <Dot x={8.500} y={8.500} r={1.600} fill="#2c5c1c" />
      <Dot x={16} y={8.500} r={1.600} fill="#2c5c1c" />
      <Dot x={21} y={16.500} r={1.300} fill="#777" />
      <Dot x={27} y={16.500} r={1.300} fill="#777" />
    </Icon>
  )
}

// Toolbar building blocks

function Arrow({ color = '#111' }: { color?: string }) {
  return (
    <svg width="6" height="4" viewBox="0 0 6 4" className="shrink-0" aria-hidden="true">
      <path d="M0 0h6L3 3.500z" fill={color} />
    </svg>
  )
}

function Grip() {
  return (
    <div className="flex w-[7px] shrink-0 justify-center self-stretch py-1">
      <div className="border-l-2 border-dotted border-[#a8a8a8]" />
    </div>
  )
}

function Separator() {
  return (
    <div className="flex w-[6px] shrink-0 justify-center self-stretch py-1">
      <div className="border-l border-[#d4d4d4]" />
    </div>
  )
}

function DropArrow({ label, className = 'w-3' }: { label: string; className?: string }) {
  return (
    <button aria-label={label} className={clsx('flex h-6 shrink-0 items-center justify-center', className)}>
      <Arrow />
    </button>
  )
}

type ToolItem = [name: string, icon: React.ReactNode] | 'sep' | 'drop'

function Tools({ items }: { items: ToolItem[] }) {
  return (
    <>
      {items.map((item, i) => {
        if (item === 'sep') return <Separator key={i} />
        if (item === 'drop') return <DropArrow key={i} label="更多选项" />
        return (
          <button key={i} aria-label={item[0]} title={item[0]} className="flex h-7 w-[31px] shrink-0 items-center justify-center">
            {item[1]}
          </button>
        )
      })}
    </>
  )
}

const fileTools: ToolItem[] = [
  ['新建', <NewIcon />],
  ['打开', <OpenIcon />],
  ['保存', <SaveIcon />],
  'sep',
  ['剪切', <CutIcon />],
  ['复制', <CopyIcon />],
  ['粘贴', <PasteIcon />],
  'sep',
  ['撤销', <UndoIcon />],
  'drop',
  ['重做', <RedoIcon />],
  'sep',
  ['触控', <TouchIcon />],
  'drop',
  'sep',
  ['信息', <InfoCommandIcon />],
  'sep'
]

const viewTools: ToolItem[] = [
  ['适合窗口', <FitIcon />],
  'drop',
  ['截面', <BracketIcon />],
  'drop',
  ['着色', <ShadedIcon />],
  'drop',
  ['背景', <PhotoIcon />]
]

const sketchTools: ToolItem[] = [
  ['轮廓', <ProfileIcon />],
  ['直线', <LineIcon />],
  ['圆弧', <ArcIcon />],
  ['圆', <CircleIcon />],
  ['圆角', <FilletIcon />],
  ['倒斜角', <ChamferIcon />],
  ['矩形', <RectIcon />],
  ['艺术样条', <SplineIcon />],
  ['点', <PlusIcon />],
  ['偏置曲线', <OffsetIcon />],
  'drop',
  'sep',
  ['快速修剪', <TrimIcon />],
  ['快速延伸', <ExtendIcon />],
  ['制作拐角', <CornerIcon />],
  'sep',
  ['快速尺寸', <DimensionIcon />],
  'drop',
  'sep',
  ['几何约束', <ParallelIcon />],
  ['设为对称', <SymmetricIcon />],
  ['显示约束', <ConstraintIcon />],
  'drop',
  'sep',
  ['转换', <ConvertIcon />],
  ['更多', <OffsetIcon />]
]

const assemblyTools: ToolItem[] = [
  ['查找组件', <FindPartIcon />],
  'drop',
  ['装配', <AssemblyIcon />],
  ['显示部件', <WindowPartsIcon />],
  ['添加组件', <AddPartIcon />],
  'drop',
  ['移动组件', <MovePartIcon />],
  ['镜像装配', <Mirror blue="#4040b4" />],
  ['装配约束', <ShowConstraintIcon />],
  'sep',
  ['替换组件', <WrenchPartIcon />],
  ['阵列组件', <ThreePartsIcon />],
  ['布置', <StepBoxesIcon />],
  'sep',
  ['爆炸图', <ExplodeIcon />],
  'sep',
  ['部件间链接', <LinkIcon />],
  ['装配序列', <SequenceIcon />],
  ['关系浏览器', <RelationIcon />],
  'sep',
  ['简单干涉', <InterferenceIcon />]
]

const menus = [
  ['基准/点', 'D'],
  ['设计特征', 'E'],
  ['细节特征', 'L'],
  ['偏置/缩放', 'O'],
  ['关联复制', 'A'],
  ['组合', 'B'],
  ['修剪', 'T'],
  ['曲线', 'C'],
  ['派生曲线', 'U'],
  ['网格曲面', 'M'],
  ['扫掠', 'W']
]

function SmallTool({ name, on, children }: { name: string; on?: boolean; children: React.ReactNode }) {
  return (
    <button
      aria-label={name}
      title={name}
      className={clsx(
        'flex h-[22px] w-[23px] shrink-0 items-center justify-center border',
        on ? 'border-[#a3c4c4] bg-[#c9dad9]' : 'border-transparent'
      )}
    >
      {children}
    </button>
  )
}

function Combo({ label, value, className }: { label: string; value: string; className: string }) {
  return (
    <div className={clsx('relative flex shrink-0 items-center', className)}>
      <select aria-label={label} className="h-5 w-full appearance-none border border-[#a0a0a0] bg-white pl-[1px] text-[11px] leading-4 text-[#222]">
        <option>{value}</option>
      </select>
      <span className="pointer-events-none absolute right-[5px]">
        <svg width="8" height="5" viewBox="0 0 8 5" aria-hidden="true">
          <path d="M0 0h8L4 4.500z" fill="#111" />
        </svg>
      </span>
    </div>
  )
}

function Toolbars() {
  return (
    <header className="shrink-0 overflow-hidden border-b-2 border-[#a8a8a8] bg-white text-[11px] text-[#222]">
      <div className="flex h-8 items-center overflow-hidden border-b border-[#d9d9d9] pb-px">
        <Grip />
        <button className="flex w-[66px] shrink-0 items-center pl-[4px]">
          <Globe />
          <span className="ml-[4px]">启动</span>
          <span className="ml-[4px]"><Arrow /></span>
        </button>
        <Tools items={fileTools} />
        <div className="ml-1 flex h-5 w-[125px] shrink-0 items-center border border-[#a0a0a0] pr-[2px]">
          <input aria-label="查找命令" defaultValue="查找命令" className="h-4 w-full min-w-0 bg-transparent pl-[1px] outline-none" />
          <button aria-label="查找"><SearchIcon /></button>
        </div>
        <DropArrow label="工具条选项" className="ml-1 w-[11px] pt-3" />
        <Separator />
        <Grip />
        <Tools items={viewTools} />
      </div>

      <div className="flex h-[34px] items-center overflow-hidden border-b border-[#d9d9d9]">
        <Grip />
        <Tools items={[['草图', <SketchIcon />]]} />
        <button disabled className="flex w-[79px] shrink-0 items-center pl-1 text-[#b0b0b0]">
          <FlagIcon />
          <span className="ml-1 whitespace-nowrap">完成草图</span>
        </button>
        <Tools items={sketchTools} />
      </div>

      <nav className="flex h-[26px] items-center overflow-hidden border-b border-[#d9d9d9]">
        <Grip />
        {menus.map(([name, key]) => (
          <button key={key} className="ml-1 mr-[3px] flex shrink-0 items-center gap-1 whitespace-nowrap">
            <span>{name}(<u>{key}</u>)</span>
            <Arrow />
          </button>
        ))}
      </nav>

      <div className="ml-3 flex">
        <div className="flex h-[34px] shrink-0 items-center border-b border-l border-r border-[#d9d9d9]">
          <Grip />
          <Tools items={assemblyTools} />
          <DropArrow label="更多选项" />
          <DropArrow label="工具条选项" className="w-[10px] pt-3" />
        </div>
      </div>

      <div className="flex h-[31px] items-center overflow-hidden pl-[5px]">
        <Combo label="类型过滤器" value="没有选择过滤器" className="w-[133px]" />
        <Combo label="选择范围" value="整个装配" className="ml-[7px] w-[139px]" />
        <div className="w-1 shrink-0" />
        <SmallTool name="坐标"><AxisIcon /></SmallTool>
        <Separator />
        <SmallTool name="过滤器"><FilterGrayIcon /></SmallTool>
        <SmallTool name="常规选择过滤器"><FilterIcon /></SmallTool>
        <DropArrow label="更多选项" className="w-2" />
        <SmallTool name="重置"><ResetIcon /></SmallTool>
        <SmallTool name="在导航器中查找"><TreeFindIcon /></SmallTool>
        <Separator />
        <SmallTool name="矩形选择"><MarqueeIcon /></SmallTool>
        <DropArrow label="更多选项" className="w-[13px]" />
        <Separator />
        <SmallTool name="面"><FaceIcon /></SmallTool>
        <SmallTool name="体"><BlueCubeIcon /></SmallTool>
        <Separator />
        <SmallTool name="启用捕捉点" on><SnapAllIcon /></SmallTool>
        <SmallTool name="端点" on><SnapEndIcon /></SmallTool>
        <SmallTool name="中点" on><SnapMidIcon /></SmallTool>
        <SmallTool name="控制点"><SnapControlIcon /></SmallTool>
        <SmallTool name="极点" on><SnapPoleIcon /></SmallTool>
        <SmallTool name="交点"><SnapCrossIcon /></SmallTool>
        <SmallTool name="圆弧中心" on><SnapCenterIcon /></SmallTool>
        <SmallTool name="象限点"><SnapQuadrantIcon /></SmallTool>
        <SmallTool name="现有点" on><SnapPointIcon /></SmallTool>
        <SmallTool name="曲线上的点" on><SnapMidIcon /></SmallTool>
      </div>
    </header>
  )
}

function ResourceBar() {
  return (
    <aside className="flex w-8 shrink-0 flex-col items-stretch overflow-hidden border-r border-[#a9a9a9] bg-[#dcdcdc]">
      <button aria-label="设置" className="mb-4 flex h-[26px] shrink-0 items-center justify-center"><GearIcon /></button>
      <button aria-label="装配导航器" className="flex h-[42px] shrink-0 items-center justify-center pl-1"><NavigatorIcon /></button>
      <button aria-label="约束导航器" className="flex h-[42px] shrink-0 items-center justify-center pl-1"><Mirror /></button>
      <button aria-label="部件导航器" className="flex h-10 shrink-0 items-center justify-center pl-1"><HistoryIcon /></button>
      <button aria-label="重用库" className="-mr-px ml-[2px] flex h-[46px] shrink-0 items-center justify-center border border-r-0 border-[#b4b4b4] bg-white"><LibraryIcon /></button>
      <button aria-label="HD3D 工具" className="mt-1 flex h-[54px] shrink-0 items-center justify-center pl-1"><BroadcastIcon /></button>
      <button aria-label="Web 浏览器" className="flex h-[54px] shrink-0 items-center justify-center pl-1"><WebPageIcon /></button>
      <button aria-label="历史记录" className="flex h-[54px] shrink-0 items-center justify-center pl-1"><ClockIcon /></button>
      <button aria-label="角色" className="flex h-8 shrink-0 items-center justify-center pl-1"><RolesIcon /></button>
      <div className="flex h-6 shrink-0 items-center justify-center"><WaveIcon /></div>
      <div className="flex flex-col items-center">
        {[
          ['第一页', 'M0 4h6L3 1zM0 6h6v1H0z', '#aaa'],
          ['上一页', 'M0 5h6L3 2z', '#aaa'],
          ['下一页', 'M0 2h6L3 5z', '#111'],
          ['最后一页', 'M0 0h6v1H0zM0 3h6L3 6z', '#111']
        ].map(([label, d, fill]) => (
          <button key={label} aria-label={label} className="flex h-[15px] w-full items-start justify-center">
            <svg width="6" height="7" viewBox="0 0 6 7" aria-hidden="true"><path d={d} fill={fill} /></svg>
          </button>
        ))}
      </div>
    </aside>
  )
}

interface TreeNode {
  name: string
  icon: React.ReactNode
  level: 0 | 1
  toggle?: '+' | '-'
}

const tree: TreeNode[] = [
  { name: 'Reusable Object Library (Example Only)', icon: <ReusableIcon />, level: 0, toggle: '+' },
  { name: '2D Section Library', icon: <SectionIcon />, level: 0, toggle: '+' },
  { name: 'GB Standard Parts', icon: <BooksIcon />, level: 0, toggle: '-' },
  { name: 'Bearing', icon: <FolderIcon />, level: 1, toggle: '+' },
  { name: 'Bolt', icon: <FolderIcon />, level: 1, toggle: '+' },
  { name: 'Nut', icon: <FolderIcon />, level: 1, toggle: '+' },
  { name: 'Pin', icon: <FolderIcon />, level: 1, toggle: '+' },
  { name: 'Profile', icon: <FolderIcon />, level: 1, toggle: '+' },
  { name: 'Screw', icon: <FolderIcon />, level: 1, toggle: '+' },
  { name: 'Washer', icon: <FolderIcon />, level: 1, toggle: '+' },
  { name: 'Reuse Examples', icon: <BooksIcon />, level: 0, toggle: '+' },
  { name: 'Siemens', icon: <BooksIcon />, level: 0, toggle: '+' },
  { name: '国标', icon: <BooksIcon />, level: 0, toggle: '+' },
  { name: 'UDF Library', icon: <BooksIcon />, level: 0, toggle: '+' },
  { name: 'Fastener Assembly Configuration Library', icon: <FastenerIcon />, level: 0 },
  { name: 'Favorites', icon: <StarIcon />, level: 0, toggle: '+' }
]

// Dotted connector with the optional expand box
function Branch({ node, first, last }: { node: TreeNode; first: boolean; last: boolean }) {
  return (
    <Icon w={19} h={20}>
      <path d={`M9.500 ${first ? 10 : 0}V${last ? 10 : 20}M10 10.500h9`} stroke="#999" strokeDasharray="1 1" />
      {node.toggle && (
        <>
          <path d="M5.500 6.500h8v8h-8z" fill="#fff" stroke="#d0d0d0" />
          <path d={node.toggle === '+' ? 'M7 10.500h5M9.500 8v5' : 'M7 10.500h5'} stroke="#111" />
        </>
      )}
    </Icon>
  )
}

function TreeLabel({ node, index }: { node: TreeNode; index: number }) {
  const last = node.level === 1 ? tree[index + 1]?.level !== 1 : index === tree.length - 1
  return (
    <div className="flex h-[19px] items-center whitespace-nowrap">
      {node.level === 1 && (
        <Icon w={19} h={20}>
          <path d="M9.500 0v20" stroke="#999" strokeDasharray="1 1" />
        </Icon>
      )}
      <Branch node={node} first={index === 0} last={last} />
      {node.icon}
      <span className="ml-[3px]">{node.name}</span>
    </div>
  )
}

function ReusePanel() {
  const emptyRows = Array.from({ length: 6 })
  return (
    <section className="flex w-[401px] shrink-0 flex-col bg-white pb-[6px] pl-[6px] pr-[9px] text-[#222]">
      <div className="flex h-7 shrink-0 items-center justify-between pl-1 pr-[7px] pt-[2px]">
        <h2 className="text-xs">重用库</h2>
        <button aria-label="最大化" className="h-[11px] w-3 border border-t-2 border-[#111]" />
      </div>
      <div className="flex min-h-0 flex-1 flex-col border border-b-0 border-[#cfcfcf] p-px pb-0">
        <div className="min-h-0 flex-1 overflow-hidden">
          <table className="w-full table-fixed border-separate border-spacing-0 text-left">
            <thead>
              <tr>
                <th className="h-[21px] w-[300px] border-b border-r border-[#cfcfcf] bg-[#efefef] p-0 pl-[6px] text-xs font-normal">名称</th>
                <th className="border-b border-[#cfcfcf] bg-[#efefef] p-0" />
              </tr>
            </thead>
            <tbody className="text-xs">
              {tree.map((node, i) => (
                <tr key={node.name} className="even:bg-[#f9f9f9]">
                  <td className="h-5 border-b border-r border-[#e2e2e2] p-0"><TreeLabel node={node} index={i} /></td>
                  <td className="border-b border-[#e2e2e2] p-0" />
                </tr>
              ))}
              {emptyRows.map((_, i) => (
                <tr key={i} className="even:bg-[#f9f9f9]">
                  <td className="h-5 border-b border-r border-[#e2e2e2] p-0" />
                  <td className="border-b border-[#e2e2e2] p-0" />
                </tr>
              ))}
            </tbody>
          </table>
        </div>
        <div className="-mx-[2px] h-[5px] shrink-0 border border-[#adadad] bg-[#d6d6d6]" />
      </div>
    </section>
  )
}

function Viewport() {
  return (
    <main className="relative min-w-0 flex-1 border-l border-[#7c8a8a] bg-linear-to-b from-[#b3b4b5] to-[#e6e7e8] to-80%">
      <svg className="absolute bottom-7 left-9" width="44" height="58" viewBox="0 0 44 58" fill="none" role="img" aria-label="坐标系">
        <path d="M10 21l12-5 11 5v17l-13 4-10-6z" fill="#cfd4d0" stroke="#b4b8b4" />
        <path d="M10 21l11 5 12-5M21 26v15M22 16v16l11 4M22 32l-12 4" stroke="#b4b8b4" />
        <path d="M10 36l20-6" stroke="#a4c4a4" strokeWidth="1.500" />
        <path d="M8 36V14" stroke="#1c3cc4" strokeWidth="2" />
        <path d="M8 11l2.500 8h-5z" fill="#1c3cc4" />
        <path d="M9 38l12 5" stroke="#c42c2c" strokeWidth="2" />
        <path d="M27 45l-8-.5 2-4z" fill="#c42c2c" />
        <circle cx="8" cy="38" r="4" fill="#b8bcbc" stroke="#8c9090" strokeWidth=".5" />
        <circle cx="7" cy="37" r="1.500" fill="#f0f0f0" />
        <text x="5" y="10" fontSize="11" fill="#4a4af0">Z</text>
        <text x="32" y="34" fontSize="10" fill="#4c9c5c">Y</text>
        <text x="27" y="53" fontSize="11" fill="#e04848">X</text>
      </svg>
    </main>
  )
}

function Task({ name, className, children }: { name: string; className: string; children: React.ReactNode }) {
  return (
    <button aria-label={name} title={name} className={clsx('flex h-full shrink-0 items-start justify-center overflow-hidden', className)}>
      {children}
    </button>
  )
}

const openTask = 'rounded-t-[3px] border-x border-[#4c6078] bg-linear-to-br from-[#eaf3fb] to-[#b5d0ea] pt-1'

function Taskbar() {
  return (
    <footer className="flex h-[33px] shrink-0 overflow-hidden border-t border-[#2c3c4c] bg-[#b2cdea]">
      <Task name="开始" className="w-[59px] bg-[#8ea2b8] pr-[5px] pt-[2px]"><WindowsIcon /></Task>
      <Task name="资源管理器" className={clsx('w-[60px]', openTask)}><ExplorerIcon /></Task>
      <Task name="计算器" className="w-[64px] pt-1"><CalculatorIcon /></Task>
      <Task name="搜狗浏览器" className={clsx('w-[60px]', openTask)}><SogouIcon /></Task>
      <Task name="浏览器" className="w-[64px] pt-1"><BrowserIcon /></Task>
      <Task name="NX" className="w-[55px] rounded-t-[3px] border-x border-[#33475c] bg-linear-to-b from-[#fafcfe] to-[#dbe8f4] pt-[3px]"><Globe size={34} /></Task>
      <div className="mr-[2px] w-[5px] shrink-0 border-r border-[#4c6078] bg-[#cfe0f0]" />
      <Task name="微信" className={clsx('w-[60px]', openTask)}><ChatIcon /></Task>
    </footer>
  )
}

export default function App() {
  return (
    <div className="flex h-screen flex-col overflow-hidden bg-white font-['Noto_Sans','Noto_Sans_CJK_SC',sans-serif]">
      <Toolbars />
      <div className="h-[21px] shrink-0" />
      <div className="flex min-h-0 flex-1">
        <ResourceBar />
        <ReusePanel />
        <Viewport />
      </div>
      <Taskbar />
    </div>
  )
}
